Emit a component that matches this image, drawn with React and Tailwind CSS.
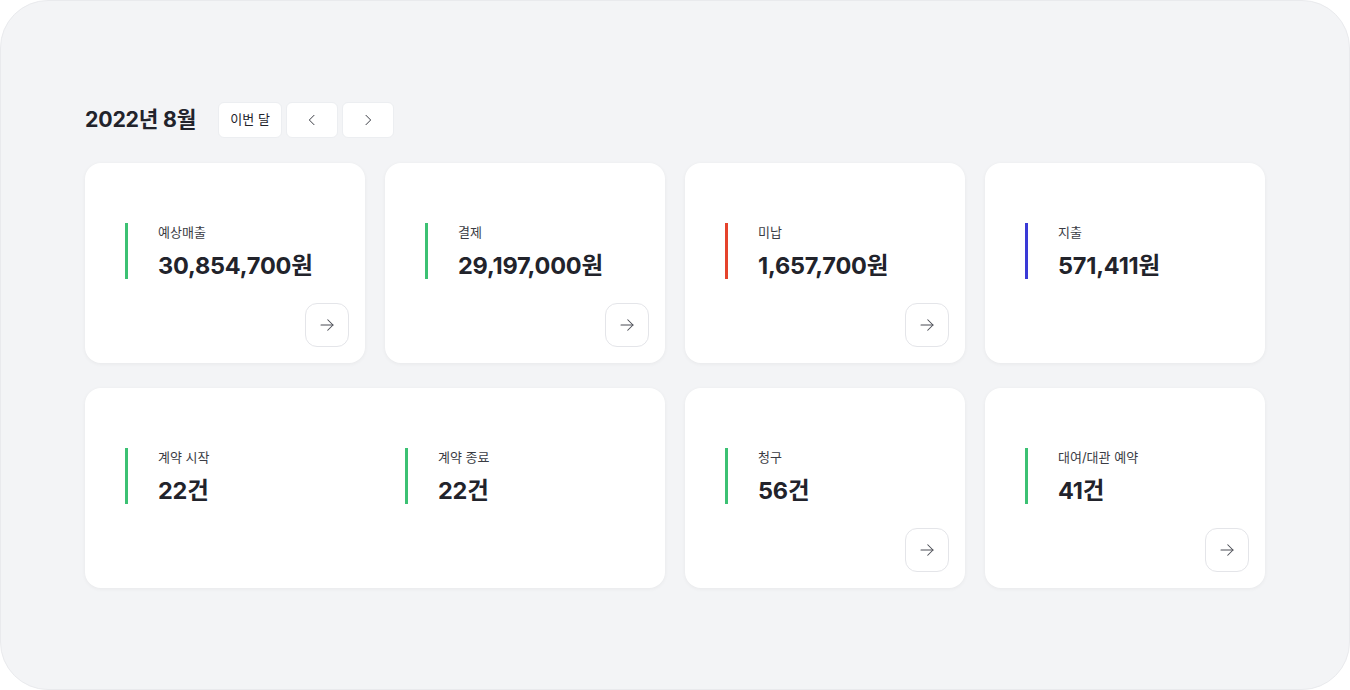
const font = { fontFamily: 'Inter, "Noto Sans CJK KR", sans-serif' };

function ArrowIcon() {
  return (
    <svg width="18" height="18" viewBox="0 0 24 24" fill="none" stroke="#4b4d55" strokeWidth="1.4" strokeLinecap="round" strokeLinejoin="round">
      <path d="M4 12h16" />
      <path d="M13 5l7 7-7 7" />
    </svg>
  );
}

function Chevron({ dir }) {
  return (
    <svg width="16" height="16" viewBox="0 0 24 24" fill="none" stroke="#3a3c44" strokeWidth="1.5" strokeLinecap="round" strokeLinejoin="round">
      {dir === 'left' ? <path d="M15 5l-7 7 7 7" /> : <path d="M9 5l7 7-7 7" />}
    </svg>
  );
}

function Stat({ label, value, bar }) {
  return (
    <div className="flex h-[56px] w-[280px] shrink-0">
      <div className={`w-[3px] h-full ${bar}`} />
      <div className="pl-[30px] flex flex-col">
        <div className="text-[13px] leading-[18px] text-[#3a3c44]">{label}</div>
        <div className="text-[23.5px] leading-[30px] font-bold text-[#22232b] mt-[10px] tracking-[-0.2px]">{value}</div>
      </div>
    </div>
  );
}

function ArrowButton() {
  return (
    <button className="absolute right-4 bottom-4 w-11 h-11 rounded-xl border border-[#e4e5e9] bg-white flex items-center justify-center">
      <ArrowIcon />
    </button>
  );
}

function Card({ children, arrow, wide }) {
  return (
    <div className={`relative bg-white rounded-2xl shadow-[0_1px_4px_rgba(0,0,0,0.05)] h-[200px] pl-10 pt-[60px] ${wide ? 'col-span-2' : ''}`}>
      {children}
      {arrow && <ArrowButton />}
    </div>
  );
}

const green = 'bg-[#3cc173]';

export default function App() {
  return (
    <div className="bg-white w-[1350px] h-[690px]" style={font}>
      <div className="w-full h-full rounded-[48px] bg-[#f3f4f6] border border-[#e9eaed] px-[84px] pt-[101px]">
        <div className="flex items-center h-9">
          <h1 className="text-[21.3px] font-bold text-[#22232b] tracking-[-0.2px] mr-[22px]">2022년 8월</h1>
          <div className="flex gap-1">
            <button className="h-9 w-16 rounded-md bg-white border border-[#eceef1] text-[13px] text-[#22232b]">이번 달</button>
            <button className="h-9 w-[52px] rounded-md bg-white border border-[#eceef1] flex items-center justify-center"><Chevron dir="left" /></button>
            <button className="h-9 w-[52px] rounded-md bg-white border border-[#eceef1] flex items-center justify-center"><Chevron dir="right" /></button>
          </div>
        </div>
        <div className="grid grid-cols-[280px_280px_280px_280px] gap-x-5 gap-y-[25px] mt-[25px]">
          <Card arrow><Stat label="예상매출" value="30,854,700원" bar={green} /></Card>
          <Card arrow><Stat label="결제" value="29,197,000원" bar={green} /></Card>
          <Card arrow><Stat label="미납" value="1,657,700원" bar="bg-[#e5432c]" /></Card>
          <Card><Stat label="지출" value="571,411원" bar="bg-[#3a3ad6]" /></Card>
          <Card wide>
            <div className="flex">
              <Stat label="계약 시작" value="22건" bar={green} />
              <Stat label="계약 종료" value="22건" bar={green} />
            </div>
          </Card>
          <Card arrow><Stat label="청구" value="56건" bar={green} /></Card>
          <Card arrow><Stat label="대여/대관 예약" value="41건" bar={green} /></Card>
        </div>
      </div>
    </div>
  );
}
